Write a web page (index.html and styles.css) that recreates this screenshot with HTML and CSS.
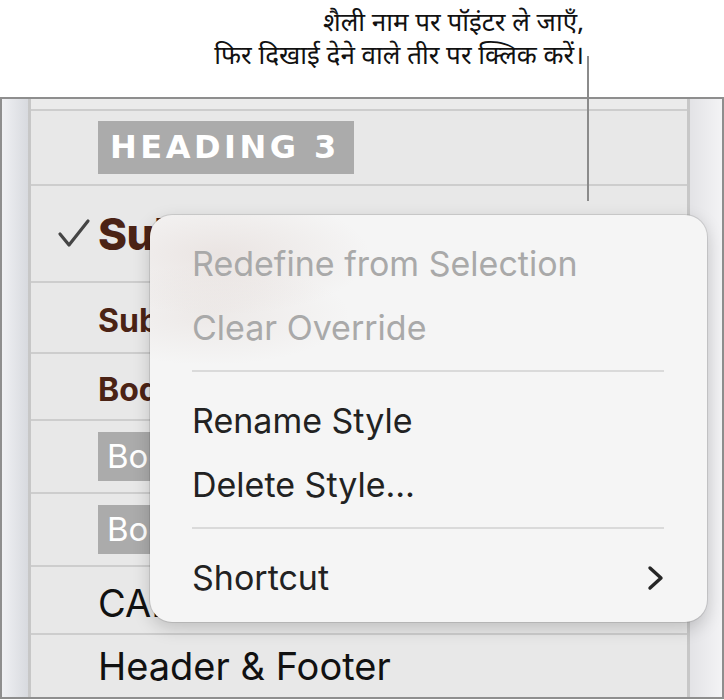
FILE: index.html
```html
<!DOCTYPE html>
<html lang="hi">
<head>
<meta charset="utf-8">
<link rel="stylesheet" href="styles.css">
</head>
<body>
<div class="page">
  <div class="callout">
    <p class="callout-text">शैली नाम पर पॉइंटर ले जाएँ,<br>फिर दिखाई देने वाले तीर पर क्लिक करें।</p>
  </div>
  <div class="panel">
    <div class="strip strip-left"></div>
    <div class="list">
      <div class="row row0"></div>
      <div class="row row1"><span class="mark"></span><span class="chip chip-heading">HEADING 3</span></div>
      <div class="row row2"><span class="mark"><svg width="36" height="32" viewBox="0 0 36 32"><polyline points="3,16 12,27 31,3" fill="none" stroke="#454545" stroke-width="3.2" stroke-linecap="round" stroke-linejoin="round"/></svg></span><span class="t-subtitle">Subtitle</span></div>
      <div class="row row3"><span class="mark"></span><span class="t-brown">Subheading</span></div>
      <div class="row row4"><span class="mark"></span><span class="t-brown">Body Bold</span></div>
      <div class="row row5"><span class="mark"></span><span class="chip chip-body">Body</span></div>
      <div class="row row6"><span class="mark"></span><span class="chip chip-body">Body Small</span></div>
      <div class="row row7"><span class="mark"></span><span class="t-plain">CAPTION</span></div>
      <div class="row row8"><span class="mark"></span><span class="t-plain">Header &amp; Footer</span></div>
    </div>
    <div class="strip strip-right"></div>
  </div>
  <div class="pointer-line"></div>
  <div class="menu">
    <div class="item disabled">Redefine from Selection</div>
    <div class="item disabled">Clear Override</div>
    <div class="sep"></div>
    <div class="item">Rename Style</div>
    <div class="item">Delete Style…</div>
    <div class="sep"></div>
    <div class="item item-sub"><span>Shortcut</span><svg class="chev" width="17" height="26" viewBox="0 0 17 26"><polyline points="3,3 14,13 3,23" fill="none" stroke="#262626" stroke-width="3.4" stroke-linecap="round" stroke-linejoin="round"/></svg></div>
  </div>
</div>
</body>
</html>
```
FILE: styles.css
```css
html, body {
  margin: 0;
  padding: 0;
  background: #ffffff;
}
.page {
  position: relative;
  width: 724px;
  height: 700px;
  overflow: hidden;
  font-family: "Inter", "Noto Sans", "Liberation Sans", sans-serif;
}
.callout {
  height: 97px;
  display: flex;
  justify-content: flex-end;
  padding-right: 140px;
  box-sizing: border-box;
}
.callout-text {
  margin: 0;
  padding-top: 9px;
  text-align: right;
  font-family: "Noto Sans Devanagari", "Lohit Devanagari", "FreeSans", "Noto Sans", sans-serif;
  font-size: 26px;
  font-weight: 400;
  line-height: 33px;
  color: #111;
}
.panel {
  display: flex;
  height: 602px;
  box-sizing: border-box;
  border: 2px solid #8e8e8e;
}
.strip-left {
  width: 26px;
  background: linear-gradient(to right, #eff0f3, #d8dadf);
  border-right: 3px solid #c7c7c7;
}
.strip-right {
  width: 32px;
  background: linear-gradient(to right, #e3e3e6, #f3f3f5);
  border-left: 3px solid #c7c7c7;
}
.list {
  flex: 1;
  display: flex;
  flex-direction: column;
  background: #e8e8e8;
}
.row {
  display: flex;
  align-items: center;
  padding-left: 24px;
  border-bottom: 2px solid #cdcdcd;
  flex: none;
  box-sizing: content-box;
  white-space: nowrap;
}
.row0 { height: 10px; background: #ebebeb; }
.row1 { height: 73px; }
.row2 { height: 95px; }
.row3 { height: 69px; }
.row4 { height: 65px; }
.row5 { height: 71px; }
.row6 { height: 71px; }
.row7 { height: 66px; }
.row8 { flex: 1; border-bottom: none; }
.row3 .t-brown, .row4 .t-brown { margin-top: 6px; }
.row7 .t-plain { margin-top: 6px; }
.mark {
  width: 43px;
  display: flex;
  align-items: center;
}
.mark svg { display: block; margin-left: 2px; }
.chip {
  background: #ababab;
  color: #fff;
  display: inline-block;
}
.chip-heading {
  font-family: "DejaVu Sans", sans-serif;
  font-weight: 700;
  font-size: 32px;
  letter-spacing: 3.5px;
  line-height: 53px;
  padding: 0 14px 0 12px;
}
.chip-body {
  font-size: 33px;
  line-height: 49px;
  padding: 0 10px 0 9px;
}
.t-subtitle {
  font-weight: 800;
  font-size: 44px;
  color: #4b2315;
  letter-spacing: -0.5px;
}
.t-brown {
  font-weight: 700;
  font-size: 32px;
  color: #4b2315;
}
.t-plain {
  font-size: 38px;
  color: #111;
}
.pointer-line {
  position: absolute;
  left: 587px;
  top: 56px;
  width: 2px;
  height: 145px;
  background: #8b8b8b;
}
.menu {
  position: absolute;
  left: 150px;
  top: 215px;
  width: 557px;
  height: 407px;
  box-sizing: border-box;
  padding: 17px 43px 11px 42px;
  border-radius: 22px;
  background:
    radial-gradient(ellipse 150px 60px at 70px 40px, rgba(190, 160, 150, 0.2), rgba(190, 160, 150, 0) 100%),
    radial-gradient(ellipse 140px 50px at 60px 100px, rgba(190, 165, 155, 0.15), rgba(190, 165, 155, 0) 100%),
    #f5f5f5;
  box-shadow: 0 0 0 1px rgba(0, 0, 0, 0.10), 0 6px 18px rgba(0, 0, 0, 0.18);
}
.item {
  font-size: 34px;
  line-height: 64px;
  color: #222;
  white-space: nowrap;
}
.item.disabled { color: #a9a9a9; }
.item-sub {
  display: flex;
  justify-content: space-between;
  align-items: center;
}
.chev { display: block; }
.sep {
  height: 2px;
  background: #dadada;
  margin: 10px 0 17px;
}
```
